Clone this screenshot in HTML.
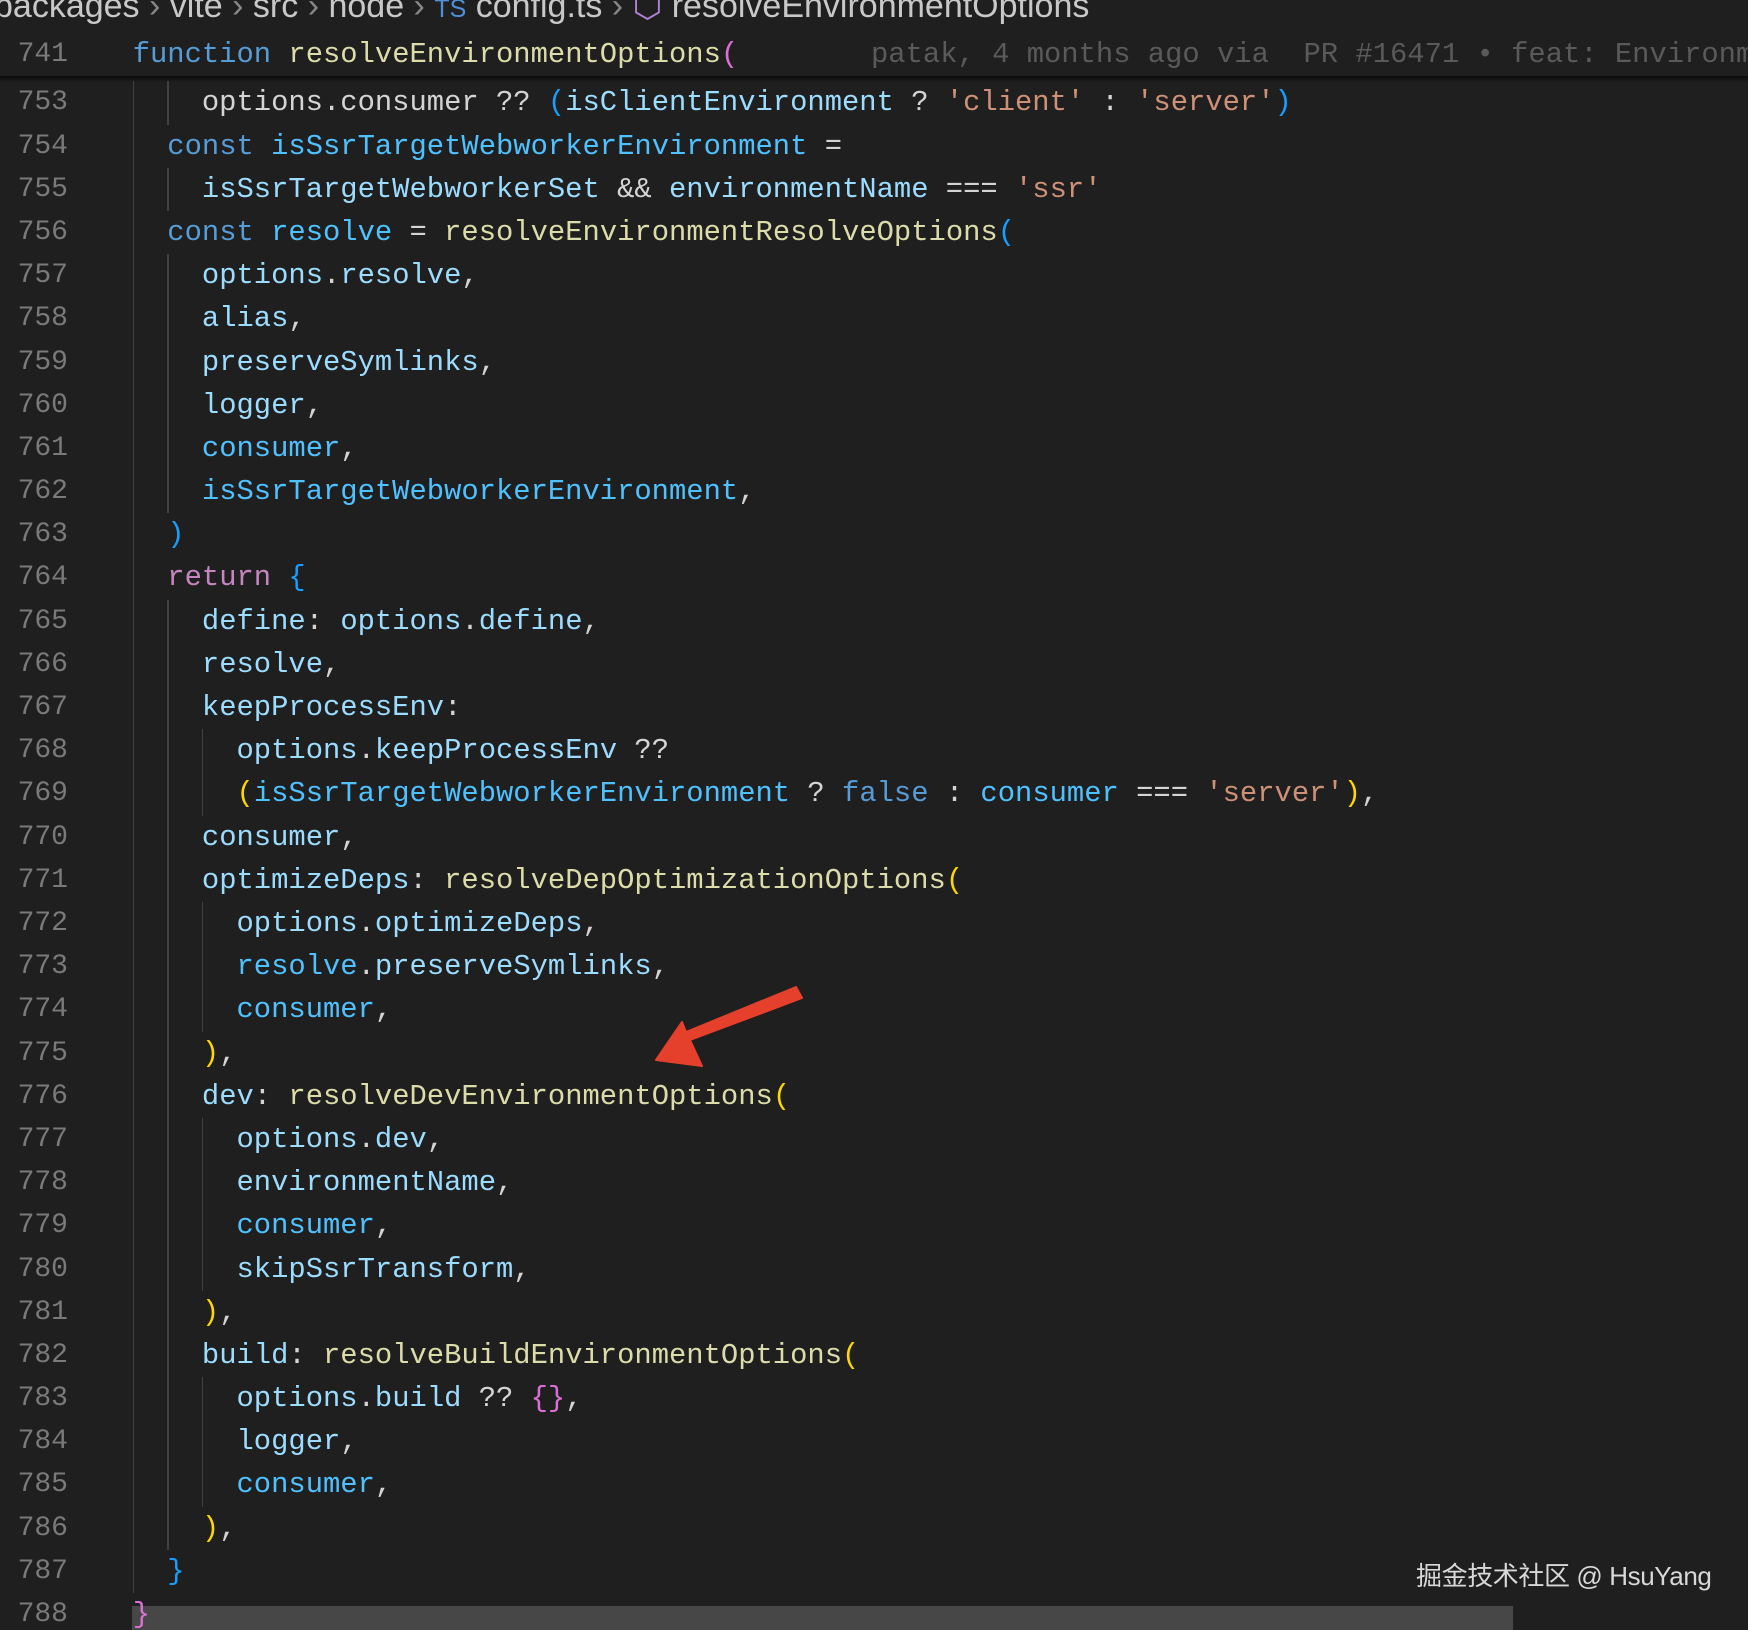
<!DOCTYPE html>
<html><head><meta charset="utf-8"><style>
html,body{margin:0;padding:0;background:#1f1f1f;width:1748px;height:1630px;overflow:hidden;position:relative}
.m{font-family:"Liberation Mono",monospace;font-size:28.83px;white-space:pre;position:absolute;line-height:43.19px;color:#d4d4d4}
.ln{position:absolute;left:0;width:68px;text-align:right;color:#7a7a7a;font-family:"Liberation Mono",monospace;font-size:28px;line-height:43.19px}
.k{color:#569cd6}.f{color:#dcdcaa}.v{color:#9cdcfe}.c{color:#4fc1ff}.s{color:#ce9178}.r{color:#c586c0}
.b1{color:#ffd700}.b2{color:#da70d6}.b3{color:#179fff}
.g{position:absolute;width:1.5px;background:#404040}
</style></head><body>
<div style="position:absolute;left:-6px;top:-14px;font-family:'Liberation Sans',sans-serif;font-size:34px;color:#c8c8c8;white-space:pre">packages <span style="color:#888">›</span> vite <span style="color:#888">›</span> src <span style="color:#888">›</span> node <span style="color:#888">›</span> <span style="color:#4f8fd8;font-size:25px">TS</span> config.ts <span style="color:#888">›</span> <span style="color:#b180d7">⬡</span> resolveEnvironmentOptions</div>
<div style="position:absolute;left:0;top:76px;width:1748px;height:6px;background:linear-gradient(#0a0a0a,rgba(0,0,0,0))"></div>
<div class="ln" style="top:33.4px">741</div>
<div class="m" style="left:132.7px;top:33.4px"><span class="k">function</span> <span class="f">resolveEnvironmentOptions</span><span class="b2">(</span></div>
<div class="m" style="left:871px;top:33.4px;color:#5a5a5a">patak, 4 months ago via  PR #16471 • feat: Environment</div>
<div style="position:absolute;left:132px;top:1606px;width:1381px;height:24px;background:#474747"></div>
<div id="g"></div>
<div id="code"></div>
<script>
var L=[
'    options.consumer ?? <span class="b3">(</span><span class="v">isClientEnvironment</span> ? <span class="s">\'client\'</span> : <span class="s">\'server\'</span><span class="b3">)</span>',
'  <span class="k">const</span> <span class="c">isSsrTargetWebworkerEnvironment</span> =',
'    <span class="v">isSsrTargetWebworkerSet</span> &amp;&amp; <span class="v">environmentName</span> === <span class="s">\'ssr\'</span>',
'  <span class="k">const</span> <span class="c">resolve</span> = <span class="f">resolveEnvironmentResolveOptions</span><span class="b3">(</span>',
'    <span class="v">options</span>.<span class="v">resolve</span>,',
'    <span class="v">alias</span>,',
'    <span class="v">preserveSymlinks</span>,',
'    <span class="v">logger</span>,',
'    <span class="c">consumer</span>,',
'    <span class="c">isSsrTargetWebworkerEnvironment</span>,',
'  <span class="b3">)</span>',
'  <span class="r">return</span> <span class="b3">{</span>',
'    <span class="v">define</span>: <span class="v">options</span>.<span class="v">define</span>,',
'    <span class="v">resolve</span>,',
'    <span class="v">keepProcessEnv</span>:',
'      <span class="v">options</span>.<span class="v">keepProcessEnv</span> ??',
'      <span class="b1">(</span><span class="c">isSsrTargetWebworkerEnvironment</span> ? <span class="k">false</span> : <span class="c">consumer</span> === <span class="s">\'server\'</span><span class="b1">)</span>,',
'    <span class="v">consumer</span>,',
'    <span class="v">optimizeDeps</span>: <span class="f">resolveDepOptimizationOptions</span><span class="b1">(</span>',
'      <span class="v">options</span>.<span class="v">optimizeDeps</span>,',
'      <span class="c">resolve</span>.<span class="v">preserveSymlinks</span>,',
'      <span class="c">consumer</span>,',
'    <span class="b1">)</span>,',
'    <span class="v">dev</span>: <span class="f">resolveDevEnvironmentOptions</span><span class="b1">(</span>',
'      <span class="v">options</span>.<span class="v">dev</span>,',
'      <span class="v">environmentName</span>,',
'      <span class="c">consumer</span>,',
'      <span class="v">skipSsrTransform</span>,',
'    <span class="b1">)</span>,',
'    <span class="v">build</span>: <span class="f">resolveBuildEnvironmentOptions</span><span class="b1">(</span>',
'      <span class="v">options</span>.<span class="v">build</span> ?? <span class="b2">{}</span>,',
'      <span class="v">logger</span>,',
'      <span class="c">consumer</span>,',
'    <span class="b1">)</span>,',
'  <span class="b3">}</span>',
'<span class="b2">}</span>'];
var h='',T=81.4,H=43.19;
for(var i=0;i<L.length;i++){var t=T+i*H;
h+='<div class="ln" style="top:'+t+'px">'+(753+i)+'</div><div class="m" style="left:132.7px;top:'+t+'px">'+L[i]+'</div>';}
function seg(x,a,b){return '<div class="g" style="left:'+x+'px;top:'+(T+(a-753)*H)+'px;height:'+((b-a+1)*H)+'px"></div>';}
var g=seg(132.7,753,787);
[[753,753],[755,755],[757,762],[765,786]].forEach(function(p){g+=seg(167.3,p[0],p[1]);});
[[768,769],[772,774],[777,780],[783,785]].forEach(function(p){g+=seg(201.9,p[0],p[1]);});
document.getElementById('g').innerHTML=g;
document.getElementById('code').innerHTML=h;
</script>
<svg style="position:absolute;left:0;top:0" width="1748" height="1630"><polygon points="796,987 802,998 690,1040 702,1066 656,1060 682,1022 686,1032" fill="#e5402c" stroke="#e5402c" stroke-width="2" stroke-linejoin="round"/></svg>
<div style="position:absolute;left:1416px;top:1556px;font-family:'Liberation Sans','Noto Sans CJK SC',sans-serif;font-size:26px;color:#d8d8d8;white-space:pre;letter-spacing:-0.4px">掘金技术社区 @ HsuYang</div>
</body></html>
